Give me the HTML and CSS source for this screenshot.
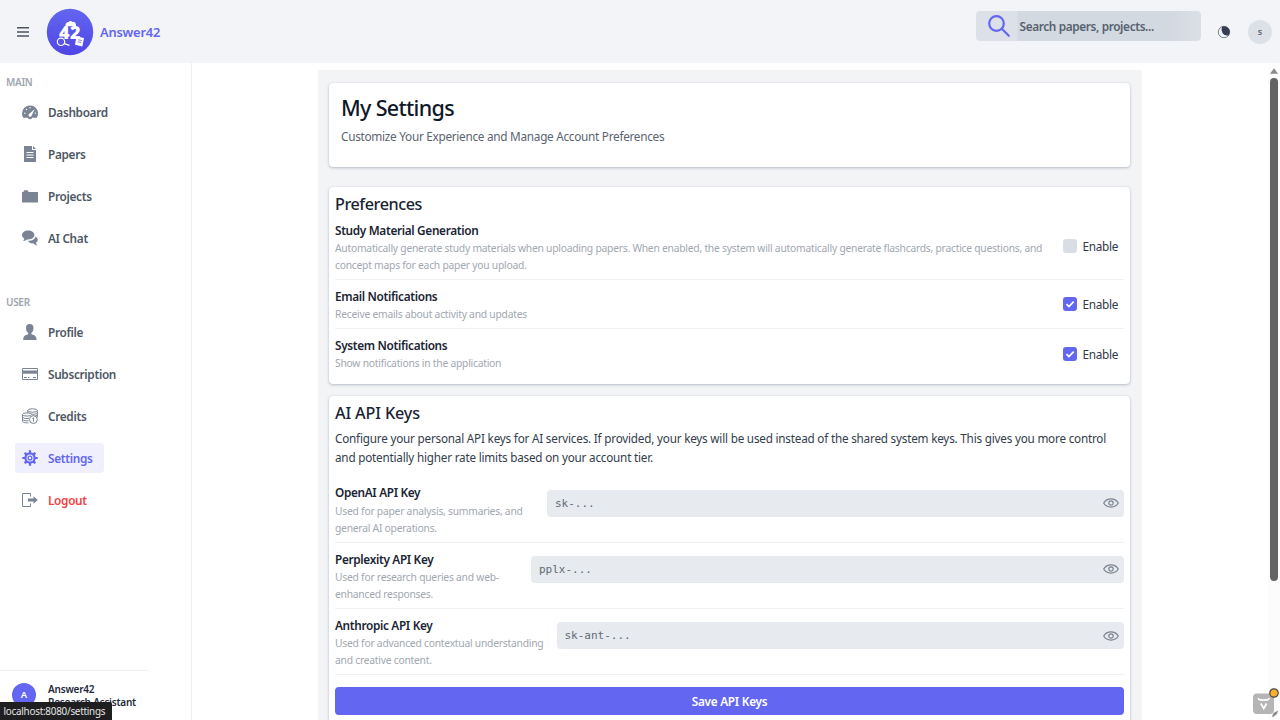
FILE: index.html
```html
<!DOCTYPE html>
<html lang="en">
<head>
<meta charset="utf-8">
<title>My Settings - Answer42</title>
<link rel="stylesheet" href="styles.css">
</head>
<body>
<div class="app">
  <header class="topbar">
    <svg class="burger" viewBox="0 0 14 12"><path d="M1 1.800h12M1 5.900h12M1 10h12"/></svg>
    <svg class="logo" viewBox="0 0 48 48">
      <defs><linearGradient id="lg" x1="0" y1="0" x2="0" y2="1"><stop offset="0" stop-color="#6366f1"/><stop offset="1" stop-color="#4f46e5"/></linearGradient></defs>
      <circle cx="24" cy="24" r="23.200" fill="url(#lg)"/>
      <path d="M19.500 18q-.5-3.500 3-4 2-2 4 0 3-.8 3.500 2.500v2z" fill="#fff"/>
      <text class="logo-num" x="24" y="30.500" text-anchor="middle">42</text>
      <circle cx="15" cy="33.800" r="3.700" fill="#5b55ec" stroke="#fff" stroke-width="1.200"/>
      <path d="M18.200 35.700l5.300 1.700" stroke="#fff" stroke-width="1.400" fill="none"/>
      <path d="M30.500 28.500l7.500 1.500-1.700 8.500-7.300-1.800z" fill="#fff"/>
      <path d="M32.300 31.800l3.500.7M31.800 33.800l3.500.7" stroke="#5b55ec" stroke-width=".8"/>
    </svg>
    <span class="brand">Answer42</span>
    <div class="search">
      <svg class="search-icon" viewBox="0 0 24 24"><circle cx="9.500" cy="9.500" r="7.300"/><path d="M14.800 14.800l7 7"/></svg>
      <span class="search-text">Search papers, projects...</span>
    </div>
    <svg class="moon" viewBox="0 0 14 14"><circle cx="7" cy="7" r="5.700" fill="#f3f4f8" stroke="#6b7481" stroke-width=".9"/><path d="M5 1.700A5.700 5.700 0 0 1 12.500 8.500Q12.100 9.700 11.300 10.500 7.500 11 5.600 8.200 3.700 5 5 1.700z" fill="#343e52"/></svg>
    <span class="user-avatar">s</span>
  </header>

  <div class="body">
    <aside class="sidebar">
      <div class="nav-title">MAIN</div>
      <nav class="nav">
        <a class="item"><svg viewBox="0 0 16 16"><path d="M8 1.500a8 8 0 0 0-8 8c0 1.600.4 3 1.200 4.200h4.600a2.300 2.300 0 0 0 4.400 0h4.600A8 8 0 0 0 8 1.500z"/><g fill="#fff"><circle cx="2.800" cy="9.300" r=".7"/><circle cx="4.500" cy="5.500" r=".7"/><circle cx="8" cy="3.800" r=".7"/><circle cx="13.400" cy="9.300" r=".7"/><path d="M12.800 5.100L9.700 11.500a1.600 1.600 0 1 1-2.300-1.700z"/></g></svg><span>Dashboard</span></a>
        <a class="item"><svg viewBox="0 0 16 16"><path d="M10 0H2v16h12V4h-4zM11 0v3h3z"/><path d="M4.500 6.500h7M4.500 9h7M4.500 11.500h7" stroke="#fff" stroke-width="1.100"/></svg><span>Papers</span></a>
        <a class="item"><svg viewBox="0 0 16 16"><path d="M0 4h1.300L2.300 2.300H5.500L6.700 4H16V14.500H0z"/></svg><span>Projects</span></a>
        <a class="item"><svg viewBox="0 0 16 16"><path d="M6.200.5C2.800.5 0 2.500 0 5.100c0 1.500 1 2.800 2.400 3.600L1.200 11c1.800 0 3.100-.8 3.900-1.500 4 .4 7.300-1.600 7.300-4.400C12.400 2.500 9.600.5 6.200.5z"/><path d="M13.300 6.800c1.500.6 2.500 1.700 2.500 3 0 1.200-.7 2.200-1.800 2.900.1 1 .6 1.800 1.300 2.600-1.500 0-2.800-.7-3.600-1.800-2.900.2-5.200-1-5.700-2.700 4 .1 7-1.500 7.300-4z"/></svg><span>AI Chat</span></a>
      </nav>
      <div class="nav-title nav-title-user">USER</div>
      <nav class="nav">
        <a class="item"><svg viewBox="0 0 16 16"><path d="M7.700 0C5.300 0 4 1.600 4 4c0 2 .8 4 2.200 5v1.300C3.500 11 1.200 12 1.200 16h13.400c0-4-2.500-5-5.200-5.700V9c1.400-1 2.100-3 2.100-5 0-2.400-1.300-4-3.800-4z"/></svg><span>Profile</span></a>
        <a class="item"><svg viewBox="0 0 16 16"><path fill="none" stroke="#7a8494" d="M.5 2.500h15v11H.5z"/><path d="M0 4.500h16v3.200H0z"/><path d="M2 11.500h3M6 11.500h1.500M11 11.500h3" stroke="#7a8494"/></svg><span>Subscription</span></a>
        <a class="item"><svg viewBox="0 0 16 16" fill="none" stroke="#7a8494"><ellipse cx="10.500" cy="2.500" rx="4.800" ry="1.700"/><path d="M5.700 2.500v2M15.300 2.500v7M9 6c3 .6 6.300 0 6.300-1.300M9.800 8c3 .5 5.500-.2 5.500-1.500"/><ellipse cx="5" cy="6.500" rx="4.500" ry="1.600"/><path d="M.5 6.500v6.800c0 1 2.500 1.800 6 1.500M.5 9c1 1.600 4 1.800 6.500 1.300M.5 11.300c1 1.500 4 1.800 6 1.400"/><circle cx="11.400" cy="11.600" r="3.900" fill="#fff"/><path d="M10.400 10.500l1.100-.8v3.900"/></svg><span>Credits</span></a>
        <a class="item item-active"><svg viewBox="0 0 16 16"><path d="M6.900.3h2.200v3H6.900zM6.900 12.700h2.200v3H6.900zM.3 6.900h3v2.200h-3zM12.700 6.900h3v2.200h-3zM1.900 3.500l1.600-1.600 2 1.800-1.800 2zM12.500 1.900l1.600 1.600-1.800 2.200-2-2zM1.900 12.500l1.600 1.600 2.200-1.800-2-2zM14.100 12.500l-1.600 1.600-2.200-1.800 2-2z"/><circle cx="8" cy="8" r="4.600" fill="none" stroke="#6366f1" stroke-width="2.200"/><circle cx="8" cy="8" r="1.900" fill="none" stroke="#6366f1" stroke-width="1.300"/></svg><span>Settings</span></a>
        <a class="item item-logout"><svg viewBox="0 0 16 16"><path d="M8.500 4.500V1.500h-8v13h8v-3" fill="none" stroke="#7a8494"/><path d="M15.800 8l-4.300-3.700v2.200H6v3h5.500v2.200z"/></svg><span>Logout</span></a>
      </nav>
      <div class="profile">
        <span class="profile-avatar">A</span>
        <div class="profile-text"><div>Answer42</div><div>Research Assistant</div></div>
      </div>
    </aside>

    <main class="content">
      <div class="page">
        <section class="card hero">
          <h1>My Settings</h1>
          <p>Customize Your Experience and Manage Account Preferences</p>
        </section>

        <section class="card prefs">
          <h2>Preferences</h2>
          <div class="row">
            <div class="label"><h3>Study Material Generation</h3><p>Automatically generate study materials when uploading papers. When enabled, the system will automatically generate flashcards, practice questions, and<br>concept maps for each paper you upload.</p></div>
            <div class="check"><span class="box"></span>Enable</div>
          </div>
          <div class="row">
            <div class="label"><h3>Email Notifications</h3><p>Receive emails about activity and updates</p></div>
            <div class="check"><span class="box box-on"><svg viewBox="0 0 14 14"><path d="M3.500 7.200l2.400 2.400 4.800-5"/></svg></span>Enable</div>
          </div>
          <div class="row">
            <div class="label"><h3>System Notifications</h3><p>Show notifications in the application</p></div>
            <div class="check"><span class="box box-on"><svg viewBox="0 0 14 14"><path d="M3.500 7.200l2.400 2.400 4.800-5"/></svg></span>Enable</div>
          </div>
        </section>

        <section class="card keys">
          <h2 class="keys-title">AI API Keys</h2>
          <p class="intro">Configure your personal API keys for AI services. If provided, your keys will be used instead of the shared system keys. This gives you more control<br>and potentially higher rate limits based on your account tier.</p>
          <div class="row key-row">
            <div class="label label-openai"><h3>OpenAI API Key</h3><p>Used for paper analysis, summaries, and<br>general AI operations.</p></div>
            <div class="field"><span>sk-...</span><svg class="eye" viewBox="0 0 16 10"><path d="M.7 5C2.300 2.300 5 .9 8 .9S13.700 2.300 15.300 5C13.700 7.700 11 9.100 8 9.100S2.300 7.700.7 5z"/><circle cx="8" cy="5" r="2.200"/></svg></div>
          </div>
          <div class="row key-row">
            <div class="label label-perplexity"><h3>Perplexity API Key</h3><p>Used for research queries and web-<br>enhanced responses.</p></div>
            <div class="field"><span>pplx-...</span><svg class="eye" viewBox="0 0 16 10"><path d="M.7 5C2.300 2.300 5 .9 8 .9S13.700 2.300 15.300 5C13.700 7.700 11 9.100 8 9.100S2.300 7.700.7 5z"/><circle cx="8" cy="5" r="2.200"/></svg></div>
          </div>
          <div class="row key-row">
            <div class="label label-anthropic"><h3>Anthropic API Key</h3><p>Used for advanced contextual understanding<br>and creative content.</p></div>
            <div class="field"><span>sk-ant-...</span><svg class="eye" viewBox="0 0 16 10"><path d="M.7 5C2.300 2.300 5 .9 8 .9S13.700 2.300 15.300 5C13.700 7.700 11 9.100 8 9.100S2.300 7.700.7 5z"/><circle cx="8" cy="5" r="2.200"/></svg></div>
          </div>
          <div class="save">Save API Keys</div>
        </section>
      </div>
    </main>

    <div class="scrollbar">
      <svg viewBox="0 0 8 6"><path d="M4 0.300L8 5.700H0z"/></svg>
      <div class="thumb"></div>
    </div>
  </div>
</div>

<div class="status">localhost:8080/settings</div>
<svg class="devtools" viewBox="0 0 30 34">
  <rect x="3" y="7.500" width="21" height="20.500" rx="4" fill="#b5b5b5"/>
  <path d="M8.500 12v.6q0 1.300 1.500 1.300h2.300q1.200 0 1.400 1 .2-1 1.400-1h2.300q1.500 0 1.500-1.300V12" fill="none" stroke="#fff" stroke-width="1.600"/>
  <path d="M10.800 17.500l2.900 5 2.900-5" fill="none" stroke="#fff" stroke-width="1.800"/>
  <path d="M22 30.500l1.500-3.500 4.500-2.500-1 3.500-4 3z" fill="#8b8b8b"/>
  <circle cx="24" cy="7" r="4.200" fill="#fdb02f" stroke="#4b453c" stroke-width="1.200"/>
</svg>
</body>
</html>
```
FILE: styles.css
```css
* { box-sizing: border-box; margin: 0; padding: 0; }
body {
  font-family: "Noto Sans", "Open Sans", sans-serif;
  font-size: 11.800px;
  color: #25303f;
  background: #fff;
  overflow: hidden;
}
.app { display: flex; flex-direction: column; height: 720px; overflow: hidden; }

/* Top bar */
.topbar {
  display: flex;
  align-items: center;
  flex: 0 0 63px;
  background: #f3f4f8;
  padding: 0 8px 0 16px;
}
.burger { width: 14px; height: 12px; fill: none; stroke: #4a5463; stroke-width: 1.500; }
.logo { width: 48px; height: 48px; margin-left: 15.500px; }
.logo-num { font: 800 18px "Open Sans", sans-serif; fill: #fff; letter-spacing: .4px; }
.brand { margin: 1px 0 0 6.500px; font-size: 12.900px; font-weight: 600; letter-spacing: -.22px; color: #6366f1; }
.search {
  display: flex;
  align-items: center;
  width: 225px;
  height: 30px;
  margin: -12px 0 0 auto;
  border-radius: 4px;
  background: linear-gradient(90deg, #dce1e9 0, #dce1e9 41px, #d3d9e1 42px, #d3d9e1 195px, #dbe0e7 100%);
}
.search-icon { width: 24px; height: 24px; margin-left: 11px; fill: none; stroke: #6366f1; stroke-width: 2.200; stroke-linecap: round; }
.search-text { margin: 0 0 0 9px; font-size: 11.800px; font-weight: 600; letter-spacing: -.36px; color: #56616f; white-space: nowrap; }
.moon { width: 14px; height: 14px; margin-left: 16.500px; }
.user-avatar {
  width: 24px;
  height: 24px;
  margin-left: 17px;
  border-radius: 50%;
  background: #dce1e8;
  color: #5c6673;
  font-size: 9px;
  font-weight: 600;
  line-height: 23px;
  text-align: center;
}

/* Sidebar */
.body { display: flex; flex: 1; min-height: 0; }
.sidebar {
  display: flex;
  flex-direction: column;
  width: 192px;
  border-right: 1px solid #eef0f3;
  padding-top: 12px;
}
.nav-title { height: 14px; padding-left: 6px; font-size: 10px; font-weight: 600; line-height: 14px; letter-spacing: -.3px; color: #9ea5b0; }
.nav { display: flex; flex-direction: column; align-items: flex-start; gap: 12px; padding: 8px 0 0 15px; }
.nav-title-user { margin-top: 42px; }
.item {
  display: flex;
  align-items: center;
  height: 30px;
  padding: 0 12px 0 7px;
  border-radius: 4px;
  font-size: 11.800px;
  font-weight: 600;
  letter-spacing: -.32px;
  color: #4d5765;
}
.item span { line-height: 16px; margin-bottom: 1px; }
.item svg { width: 16px; height: 16px; margin-right: 10px; }
.item svg:not([fill]) { fill: #7a8494; }
.item-active { background: #efeffe; color: #6366f1; }
.item-active svg:not([fill]) { fill: #6366f1; }
.item-logout { color: #f43f46; }
.profile {
  display: flex;
  flex: 0 0 50px;
  width: 148px;
  margin-top: auto;
  padding: 12px 0 0 12px;
  border-top: 1px solid #f1f2f4;
}
.profile-avatar { width: 24px; height: 24px; border-radius: 50%; background: #6366f1; color: #fff; font-size: 9.500px; font-weight: 600; line-height: 24px; text-align: center; }
.profile-text { margin-left: 12px; font-size: 10px; font-weight: 600; line-height: 12.500px; letter-spacing: -.21px; color: #1d2939; white-space: nowrap; }

/* Main content */
.content { flex: 1; min-width: 0; padding: 7px 0 0 126px; overflow: hidden; }
.page { display: flex; flex-direction: column; width: 824px; padding: 12.500px 12px 0 11px; background: #f3f4f6; height: 660px; }
.card { flex-shrink: 0; border-radius: 4px; background: #fff; box-shadow: 0 1px 3px rgba(30, 50, 80, .28), 0 0 1px rgba(30, 50, 80, .15); }
.hero { height: 84.500px; padding: 10.400px 12px; }
.hero h1 { font-size: 21.500px; font-weight: 500; line-height: 30px; letter-spacing: -.67px; color: #101828; }
.hero p { margin-top: 4px; font-size: 11.800px; line-height: 19px; letter-spacing: -.29px; color: #5b6470; }
.prefs { margin-top: 20px; height: 197px; padding: 6px 6px 0; }
.keys { margin-top: 11.500px; height: 340px; padding: 6px 6px 0; }
h2 { height: 20.500px; font-size: 16.200px; font-weight: 500; line-height: 22px; letter-spacing: -.44px; color: #1a2433; }
.keys-title { letter-spacing: -.15px; }
.row { display: flex; align-items: center; justify-content: space-between; height: 49.500px; border-bottom: 1px solid #f0f1f3; }
.prefs .row:nth-of-type(1), .key-row { height: 66.200px; }
.prefs .row:last-child { border-bottom: 0; }
.label { flex: 0 0 auto; align-self: flex-start; padding-top: 7px; white-space: nowrap; }
.row h3 { font-size: 11.800px; font-weight: 600; line-height: 18.500px; letter-spacing: -.33px; color: #1a2433; }
.row p { margin-top: .7px; font-size: 10.300px; line-height: 17.200px; letter-spacing: -.236px; color: #a1a7b1; }
.check { display: flex; align-items: center; margin-right: 6px; letter-spacing: -.32px; color: #303a48; }
.box { width: 14px; height: 14px; margin-right: 6px; border-radius: 3px; background: #d9dee4; }
.box-on { background: #6366f1; }
.box svg { display: block; width: 14px; height: 14px; fill: none; stroke: #fff; stroke-width: 1.700; }
.intro { margin: 6.800px 0 9.200px; font-size: 11.700px; line-height: 19.200px; letter-spacing: -.197px; color: #333d4b; white-space: nowrap; }
.label-openai { width: 212px; }
.label-perplexity { width: 196px; }
.label-anthropic { width: 221.500px; }
.field {
  display: flex;
  align-items: center;
  justify-content: space-between;
  align-self: flex-start;
  flex: 1;
  height: 27px;
  margin-top: 13.300px;
  padding: 0 5.500px 0 8px;
  border-radius: 4px;
  background: #e7eaee;
  font: 11px "DejaVu Sans Mono", monospace;
  color: #616b78;
}
.eye { width: 16px; height: 10px; fill: none; stroke: #7a8494; stroke-width: 1.200; }
.save { height: 28px; margin-top: 12px; border-radius: 4px; background: #6366f1; color: #fff; font-size: 11.800px; font-weight: 600; line-height: 29px; letter-spacing: -.26px; text-align: center; }

/* Scrollbar */
.scrollbar { display: flex; flex-direction: column; align-items: center; width: 12px; margin-left: auto; padding-top: 5px; background: #fcfcfc; }
.scrollbar svg { width: 8px; height: 6px; fill: #8a8a8a; }
.thumb { width: 8px; height: 503px; margin-top: 4px; border-radius: 4px; background: #636363; }

/* Browser overlays */
.status { position: absolute; left: 0; bottom: 0; width: 112px; height: 18px; padding-left: 3.500px; border-top-right-radius: 2px; background: #1f1f21; color: #e6e6e6; font-size: 9.900px; line-height: 18px; letter-spacing: -.25px; white-space: nowrap; }
.devtools { position: absolute; left: 1250px; top: 686px; width: 30px; height: 34px; }
```
